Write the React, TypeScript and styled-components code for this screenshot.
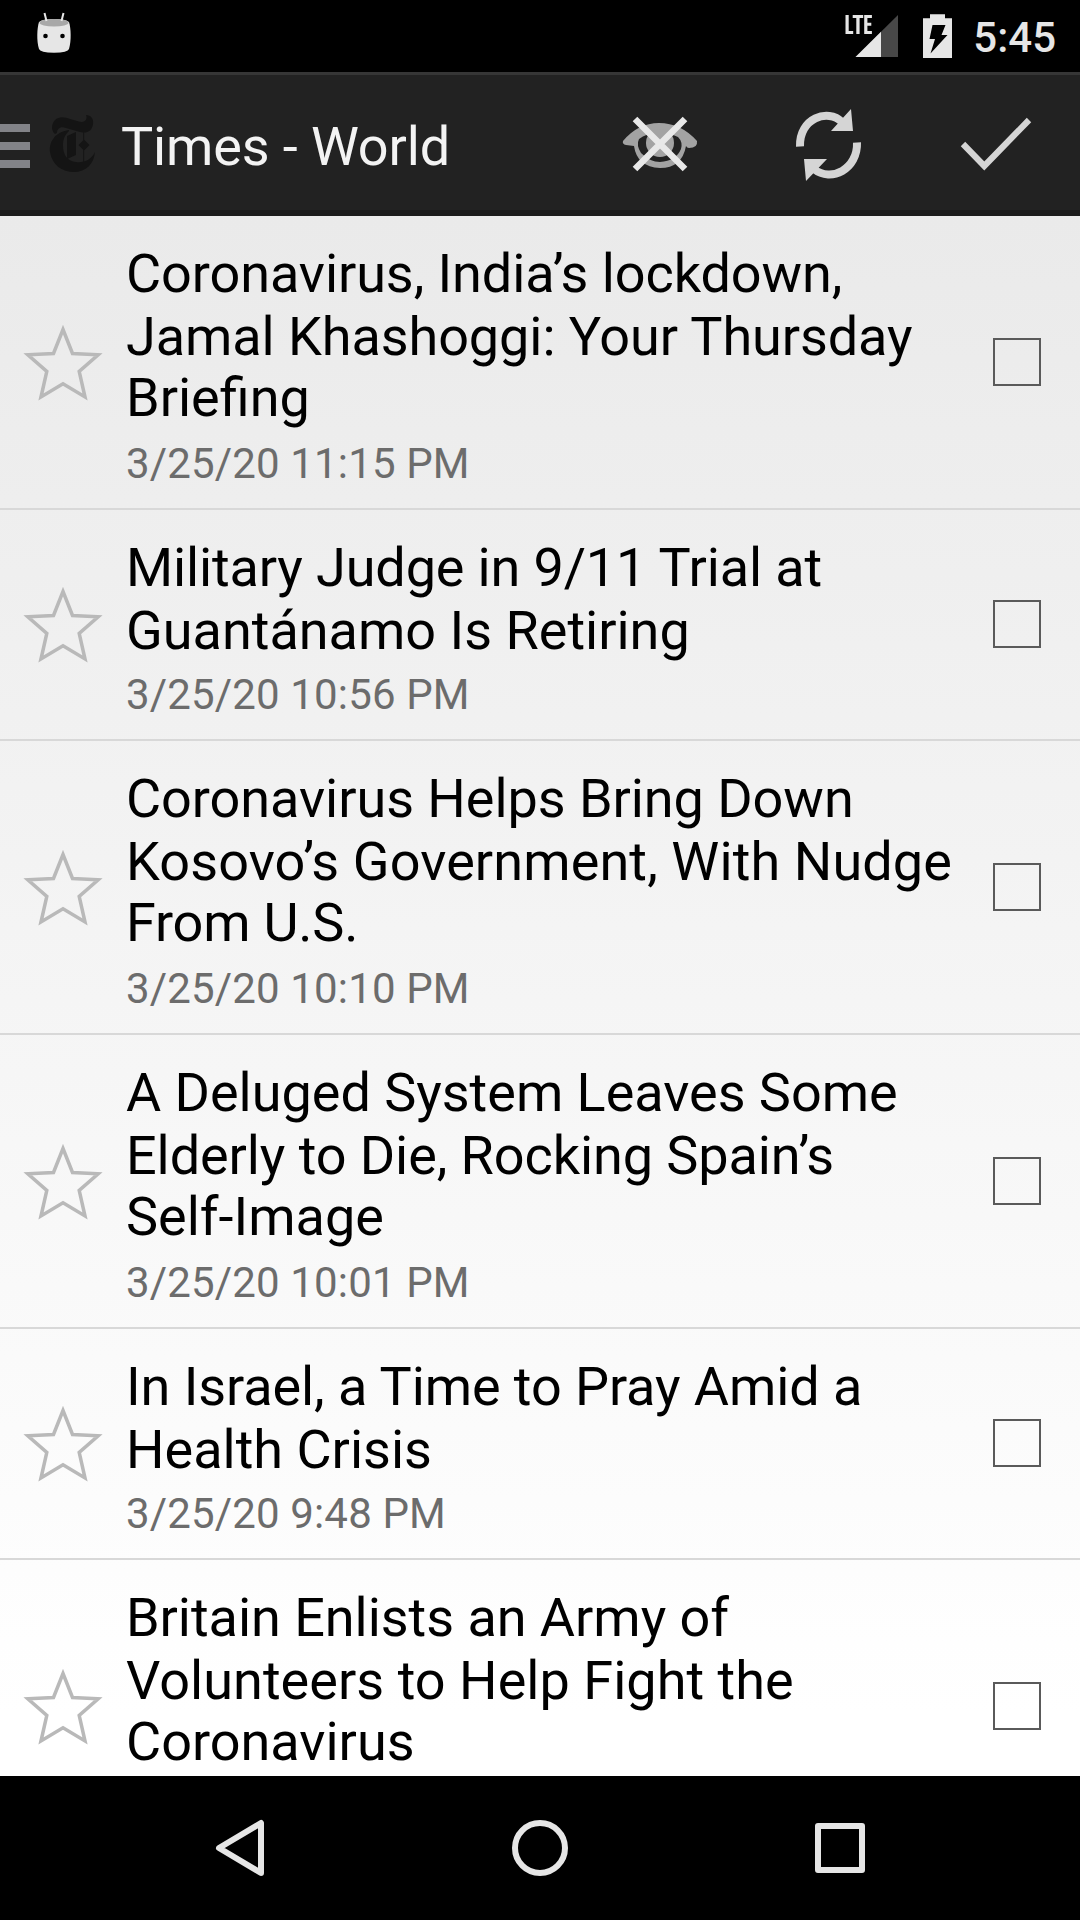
import React from "react";
import styled, { createGlobalStyle } from "styled-components";

const GlobalStyle = createGlobalStyle`
  html, body { margin: 0; padding: 0; background: #000; }
  * { box-sizing: border-box; }
`;

const Screen = styled.div`
  width: 1080px;
  height: 1920px;
  display: flex;
  flex-direction: column;
  overflow: hidden;
  background: #000;
  font-family: Roboto, sans-serif;
`;

const StatusBar = styled.header`
  height: 72px;
  flex: none;
  display: flex;
  align-items: center;
  padding: 0 24px 0 36px;
  background: #000;
`;

const Spacer = styled.div`
  flex: 1;
`;

const Clock = styled.span`
  width: 82px;
  margin-left: 20px;
  display: flex;
  justify-content: flex-end;
  font-size: 42px;
  font-weight: 500;
  line-height: 49px;
  color: #e6e6e6;
  padding-top: 2px;
`;

const StatusIcon = styled.svg`
  display: block;
  flex: none;
`;

const Toolbar = styled.nav`
  height: 144px;
  flex: none;
  display: flex;
  align-items: center;
  padding-top: 3px;
  background: #222;
  border-top: 3px solid #363636;
  border-bottom: 6px solid #1b1b1b;
`;

const Drawer = styled.button`
  width: 30px;
  height: 48px;
  padding: 4px 0 0;
  border: 0;
  background: none;
  display: flex;
  flex-direction: column;
  justify-content: space-between;
`;

const DrawerBar = styled.span`
  height: 8px;
  width: 30px;
  background: #828388;
`;

const Logo = styled.svg`
  display: block;
  flex: none;
  margin-left: 18px;
`;

const Title = styled.h1`
  margin: 0 0 0 23px;
  padding-top: 6px;
  font-size: 54px;
  font-weight: 400;
  line-height: 64px;
  letter-spacing: -0.13px;
  color: #f3f3f3;
  flex: 1;
  white-space: nowrap;
`;

const Action = styled.button`
  width: 168px;
  height: 132px;
  padding: 0;
  border: 0;
  background: none;
  display: flex;
  align-items: center;
  justify-content: center;
`;

const List = styled.main`
  flex: 1;
  min-height: 0;
  overflow: hidden;
  background: linear-gradient(#eaeaea, #fff 96%);
`;

const Row = styled.article<{ $lines: number }>`
  height: ${(p) => 105 + p.$lines * 63}px;
  display: flex;
  align-items: center;
  padding-bottom: ${(p) => (p.$lines === 2 ? 1 : 0)}px;
  border-bottom: 2px solid #d8d8d8;
`;

const Star = styled.svg`
  flex: none;
  width: 126px;
  height: 90px;
`;

const Body = styled.div`
  flex: 1;
  align-self: flex-start;
  padding-top: 26px;
`;

const Headline = styled.h2`
  margin: 0;
  font-size: 54px;
  font-weight: 400;
  line-height: 63px;
  color: #000;
  white-space: nowrap;
`;

const Line = styled.span<{ $lift: boolean; $track: number }>`
  display: block;
  height: 63px;
  line-height: ${(p) => (p.$lift ? 59 : 63)}px;
  letter-spacing: ${(p) => (p.$track ? `${p.$track}px` : "normal")};
`;

const Stamp = styled.time`
  display: block;
  margin-top: 3px;
  font-size: 42px;
  line-height: 60px;
  letter-spacing: 0.15px;
  color: #6c6c6c;
`;

const Check = styled.span`
  flex: none;
  width: 48px;
  height: 48px;
  margin-right: 39px;
  border: 2px solid #5a5a5a;
`;

const NavBar = styled.footer`
  height: 144px;
  flex: none;
  display: flex;
  justify-content: center;
  background: #000;
`;

const NavKey = styled.button`
  width: 300px;
  height: 144px;
  padding: 0;
  border: 0;
  background: none;
`;

type Article = { lines: string[]; track: number[]; time?: string };

const articles: Article[] = [
  { lines: ["Coronavirus, India’s lockdown,", "Jamal Khashoggi: Your Thursday", "Briefing"], track: [-0.08, -0.08, 0], time: "3/25/20 11:15 PM" },
  { lines: ["Military Judge in 9/11 Trial at", "Guantánamo Is Retiring"], track: [-0.14, 0], time: "3/25/20 10:56 PM" },
  { lines: ["Coronavirus Helps Bring Down", "Kosovo’s Government, With Nudge", "From U.S."], track: [-0.05, 0.11, -0.2], time: "3/25/20 10:10 PM" },
  { lines: ["A Deluged System Leaves Some", "Elderly to Die, Rocking Spain’s", "Self-Image"], track: [-0.02, -0.08, 0], time: "3/25/20 10:01 PM" },
  { lines: ["In Israel, a Time to Pray Amid a", "Health Crisis"], track: [-0.08, 0], time: "3/25/20 9:48 PM" },
  { lines: ["Britain Enlists an Army of", "Volunteers to Help Fight the", "Coronavirus"], track: [-0.04, 0.04, 0] },
];

export default function App() {
  return (
    <>
      <GlobalStyle />
      <Screen>
        <StatusBar>
          <StatusIcon width="36" height="72" viewBox="36 0 36 72">
            <path d="M39 22C37 28 36.5 41 39 49Q40 52.7 54 52.7Q68 52.7 69 49C71.5 41 71 28 69 22Q66 19 54 19Q42 19 39 22Z" fill="#e6e6e6" />
            <ellipse cx="54" cy="22.7" rx="14.5" ry="3.8" fill="#a8a8a8" />
            <path d="M44.5 13L46.5 21M63.5 13L61.5 21" stroke="#e6e6e6" strokeWidth="2" />
            <circle cx="45.5" cy="36" r="2.3" />
            <circle cx="62.5" cy="36" r="2.3" />
          </StatusIcon>
          <Spacer />
          <StatusIcon width="112" height="72" viewBox="842 0 112 72">
            <path d="M845.5 15h3.2v16h4.5v3h-7.7ZM852.7 15h10.5v3.1h-3.6v15.9h-3.3v-15.9h-3.6ZM864.2 15h7.7v3h-4.5v4.8h3.9v3h-3.9v5.2h4.5v3h-7.7Z" fill="#e6e6e6" />
            <path d="M898 15V57H855.5Z" fill="#484848" />
            <path d="M881 31.7V57H855.5Z" fill="#e6e6e6" />
            <path d="M930 14.2h15v4h7V58h-29V18.2h7Z" fill="#e6e6e6" />
            <path d="M932.500 25H945.500L941.500 35H947.500L930.500 53.500L935 39H929.500Z" fill="#000" />
          </StatusIcon>
          <Clock>5:45</Clock>
        </StatusBar>
        <Toolbar>
          <Drawer aria-label="Menu"><DrawerBar /><DrawerBar /><DrawerBar /></Drawer>
          <Logo width="50" height="60" viewBox="48 114 50 60">
            <path d="M86 115C91 115 94 119 93 124C92 131 87 134 80 132L66 128C60 126 57 129 57 133L55 134C51 131 51 124 55 120C59 116 65 117 70 119L79 121.500C84 123 88 120 86 115Z M69 130C54 132 49 143 50 152C52 165 62 172 74 172C86 172 94 164 95 152C91 160 84 163 76 162C68 161 63 156 63 145C63 139 65 135 69 131Z" fill="#141414" />
            <path d="M67 136L76 132V155L67 159ZM84 139.500L89.500 145L84 150.500L78.500 145ZM83.200 132h1v30h-1Z" fill="#141414" />
          </Logo>
          <Title>Times - World</Title>
          <Action aria-label="Hide read">
            <svg width="84" height="84" viewBox="618 102 84 84">
              <path fillRule="evenodd" d="M623 141Q638 123 659 123Q681 123 697 141Q698 148 689 148Q687 148 686 146Q682 168 660 168Q637 167 634 146L626 145Q622 144 623 141ZM639 139Q636 145 641 153Q650 162 660 162Q676 161 681 149Q683 142 678 137Q670 133 659 133Q646 133 639 139Z" fill="#a3a3a3" />
              <circle cx="660" cy="143" r="14" fill="#a3a3a3" />
              <path d="M635 119L685 169M685 119L635 169" stroke="#e8e8e8" strokeWidth="6.500" />
            </svg>
          </Action>
          <Action aria-label="Refresh">
            <svg width="84" height="84" viewBox="786 102 84 84">
              <path d="M800 146.5C799 118 828 108 842 122M857 142.5C858 169 831 183 814 169" fill="none" stroke="#d5d5d5" strokeWidth="8" />
              <path d="M851 109L853 131H831ZM806 181L804 159H827Z" fill="#d5d5d5" />
            </svg>
          </Action>
          <Action aria-label="Mark all read">
            <svg width="84" height="84" viewBox="954 102 84 84">
              <path d="M963 144L984.3 166L1029 120" fill="none" stroke="#d5d5d5" strokeWidth="6.200" />
            </svg>
          </Action>
        </Toolbar>
        <List>
          {articles.map((a) => (
            <Row key={a.lines[0]} $lines={a.lines.length}>
              <Star viewBox="0 0 126 90">
                <path d="M63 12.500L72.500 36.500L98.200 37.800L79.200 54.500L85 80L63 66.800L41 80L46.800 54.500L27.800 37.800L53.500 36.500Z" fill="none" stroke="#b9b9b9" strokeWidth="3.500" />
              </Star>
              <Body>
                <Headline>
                  {a.lines.map((l, i) => <Line key={l} $lift={i === 2} $track={a.track[i]}>{l}</Line>)}
                </Headline>
                {a.time && <Stamp>{a.time}</Stamp>}
              </Body>
              <Check role="checkbox" aria-checked="false" />
            </Row>
          ))}
        </List>
        <NavBar>
          <NavKey aria-label="Back">
            <svg width="300" height="144" viewBox="90 1776 300 144">
              <path d="M261 1823V1873L219 1848Z" fill="none" stroke="#e6e6e6" strokeWidth="6" strokeLinejoin="round" />
            </svg>
          </NavKey>
          <NavKey aria-label="Home">
            <svg width="300" height="144" viewBox="390 1776 300 144">
              <circle cx="540" cy="1848" r="25" fill="none" stroke="#e6e6e6" strokeWidth="6" />
            </svg>
          </NavKey>
          <NavKey aria-label="Recents">
            <svg width="300" height="144" viewBox="690 1776 300 144">
              <rect x="818" y="1826" width="44" height="44" fill="none" stroke="#e6e6e6" strokeWidth="6" strokeLinejoin="round" />
            </svg>
          </NavKey>
        </NavBar>
      </Screen>
    </>
  );
}
